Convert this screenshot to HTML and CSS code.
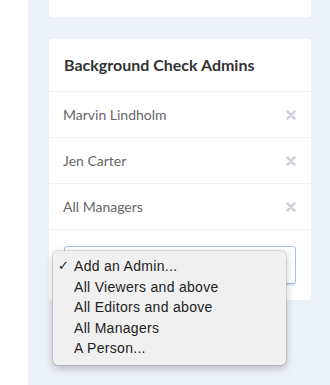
FILE: index.html
```html
<!DOCTYPE html>
<html>
<head>
  <meta charset="utf-8">
  <meta name="viewport" content="width=device-width">
  <title>Settings</title>
  <link rel="stylesheet" href="styles.css">
</head>
<body>
  <div class="layout">
    <div class="sidebar"></div>
    <div class="main">
      <div class="card card-top"></div>

      <div class="card">
        <h3 class="card-title">Background Check Admins</h3>
        <ul class="admins">
          <li>
            <span>Marvin Lindholm</span>
            <button class="remove"><svg viewBox="0 0 10 10"><path d="M1.5 1.5l7 7M8.5 1.5l-7 7"/></svg></button>
          </li>
          <li>
            <span>Jen Carter</span>
            <button class="remove"><svg viewBox="0 0 10 10"><path d="M1.5 1.5l7 7M8.5 1.5l-7 7"/></svg></button>
          </li>
          <li>
            <span>All Managers</span>
            <button class="remove"><svg viewBox="0 0 10 10"><path d="M1.5 1.5l7 7M8.5 1.5l-7 7"/></svg></button>
          </li>
        </ul>
        <div class="add-row">
          <div class="select-box"></div>
          <ul class="popup">
            <li class="checked">Add an Admin...</li>
            <li>All Viewers and above</li>
            <li>All Editors and above</li>
            <li>All Managers</li>
            <li>A Person...</li>
          </ul>
        </div>
      </div>
    </div>
  </div>
</body>
</html>
```

FILE: styles.css
```css
*{
  box-sizing:border-box;
}
body{
  margin:0;
  height:100vh;
  overflow:hidden;
  font-family:Lato, "Noto Sans", sans-serif;
  background-color:#fff;
}
.layout{
  display:flex;
  height:100%;
}
.sidebar{
  width:28px;
  flex-shrink:0;
  background-color:#fff;
}
.main{
  flex:1;
  background-color:#edf1f8;
  padding:0 19px 0 21px;
}
.card{
  background-color:#fff;
  border-radius:4px;
  margin-bottom:22px;
}
.card-top{
  height:60px;
  margin-top:-43px;
}
.card-title{
  margin:0;
  padding:16px 15px 17px;
  font-size:16px;
  line-height:19px;
  font-weight:700;
  color:#333;
  border-bottom:1px solid #eef0f3;
}
.admins{
  list-style:none;
  margin:0;
  padding:0;
}
.admins li{
  display:flex;
  align-items:center;
  justify-content:space-between;
  height:46px;
  padding:0 15px 0 14px;
  border-bottom:1px solid #eef0f3;
  font-size:14px;
  color:#666;
}
.remove{
  display:flex;
  border:none;
  background:none;
  padding:0;
  cursor:pointer;
}
.remove svg{
  width:10px;
  height:10px;
  stroke:#cdd2dd;
  stroke-width:2.6;
  stroke-linecap:round;
  fill:none;
}
.add-row{
  position:relative;
  padding:16px 15px 16px;
}
.select-box{
  height:38px;
  border:1px solid #a6bfe8;
  border-radius:3px;
  background-color:#fff;
  box-shadow:0 2px 0 #e6ebf3;
}
.popup{
  position:absolute;
  top:21px;
  left:4px;
  width:233px;
  margin:0;
  padding:5px 0 6px;
  list-style:none;
  background-color:#f0f0f0;
  border-radius:5px;
  box-shadow:0 0 0 1px rgba(0,0,0,0.1), 0 3px 8px rgba(0,0,0,0.25);
  font-family:"Liberation Sans", Arial, sans-serif;
  font-size:14px;
  letter-spacing:0.3px;
  color:#222;
}
.popup li{
  height:20.5px;
  line-height:20.5px;
  padding-left:21px;
  position:relative;
}
.popup li.checked::before{
  content:"\2713";
  position:absolute;
  left:5px;
  font-size:13px;
}
```
